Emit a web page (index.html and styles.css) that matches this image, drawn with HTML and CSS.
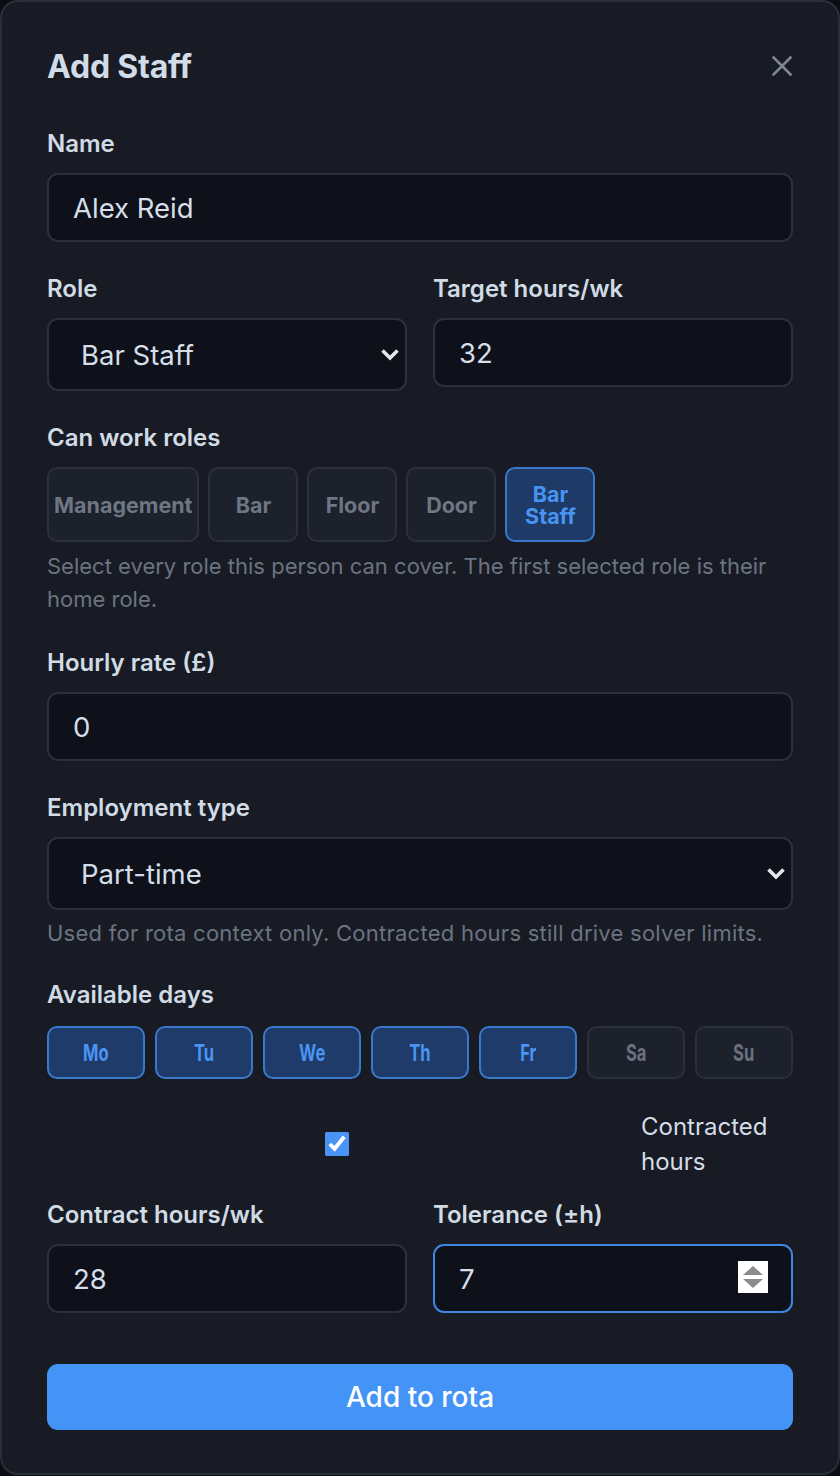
FILE: index.html
```html
<!DOCTYPE html>
<html lang="en">
<head>
<meta charset="utf-8">
<title>Add Staff</title>
<link rel="stylesheet" href="styles.css">
</head>
<body>
<div class="modal">
  <div class="header">
    <h1 class="title">Add Staff</h1>
    <button class="close" aria-label="Close">
      <svg width="20" height="20" viewBox="0 0 20 20"><path d="M1.5 1.5 L18.5 18.5 M18.5 1.5 L1.5 18.5" stroke="#7f8994" stroke-width="2.6" stroke-linecap="square" fill="none"/></svg>
    </button>
  </div>

  <div class="field">
    <label class="label">Name</label>
    <input class="input" type="text" value="Alex Reid">
  </div>

  <div class="row">
    <div class="field">
      <label class="label">Role</label>
      <div class="select-wrap">
        <select class="select"><option>Bar Staff</option></select>
        <svg class="chevron" width="20" height="13" viewBox="0 0 20 13"><path d="M2.5 2.5 L10 10 L17.5 2.5" stroke="#e2e8ef" stroke-width="3.6" fill="none"/></svg>
      </div>
    </div>
    <div class="field">
      <label class="label">Target hours/wk</label>
      <input class="input" type="text" value="32">
    </div>
  </div>

  <div class="field">
    <label class="label">Can work roles</label>
    <div class="chips">
      <button class="chip chip-wide">Management</button>
      <button class="chip">Bar</button>
      <button class="chip">Floor</button>
      <button class="chip">Door</button>
      <button class="chip chip-on">Bar Staff</button>
    </div>
    <p class="hint">Select every role this person can cover. The first selected role is their home role.</p>
  </div>

  <div class="field">
    <label class="label">Hourly rate (£)</label>
    <input class="input" type="text" value="0">
  </div>

  <div class="field field-employment">
    <label class="label">Employment type</label>
    <div class="select-wrap">
      <select class="select"><option>Part-time</option></select>
      <svg class="chevron" width="20" height="13" viewBox="0 0 20 13"><path d="M2.5 2.5 L10 10 L17.5 2.5" stroke="#e2e8ef" stroke-width="3.6" fill="none"/></svg>
    </div>
    <p class="hint hint-wide">Used for rota context only. Contracted hours still drive solver limits.</p>
  </div>

  <div class="field field-days">
    <label class="label days-label">Available days</label>
    <div class="days">
      <button class="day day-on"><span>Mo</span></button>
      <button class="day day-on"><span>Tu</span></button>
      <button class="day day-on"><span>We</span></button>
      <button class="day day-on"><span>Th</span></button>
      <button class="day day-on"><span>Fr</span></button>
      <button class="day"><span>Sa</span></button>
      <button class="day"><span>Su</span></button>
    </div>
  </div>

  <label class="check-row">
    <span class="check-cell"><input class="check" type="checkbox" checked></span>
    <span class="check-text">Contracted hours</span>
  </label>

  <div class="row row-contract">
    <div class="field">
      <label class="label">Contract hours/wk</label>
      <input class="input" type="text" value="28">
    </div>
    <div class="field">
      <label class="label">Tolerance (±h)</label>
      <div class="spin-wrap">
        <input class="input input-focus" type="text" value="7">
        <span class="spinner"><i class="up"></i><i class="down"></i></span>
      </div>
    </div>
  </div>

  <button class="submit">Add to rota</button>
</div>
</body>
</html>
```

FILE: styles.css
```css
* { box-sizing: border-box; }

html, body {
  margin: 0;
  padding: 0;
  background: #0b0e13;
}

body {
  font-family: Inter, "Noto Sans", "Liberation Sans", sans-serif;
  color: #d3dce7;
}

.modal {
  width: 840px;
  height: 1475px;
  background: #181b23;
  border: 2px solid #2a2e3b;
  border-radius: 18px;
  padding: 37px 45px 0 45px;
  display: flex;
  flex-direction: column;
}

.header {
  height: 54px;
  display: flex;
  align-items: center;
  justify-content: space-between;
  margin-bottom: 36px;
}

.title {
  margin: 0;
  font-size: 32px;
  font-weight: 700;
  color: #d1dce8;
  letter-spacing: -0.2px;
}

.close {
  background: none;
  border: 0;
  padding: 0;
  width: 20px;
  height: 20px;
  margin-right: 1px;
  display: flex;
}

.field {
  display: flex;
  flex-direction: column;
  margin-bottom: 32px;
}

.label {
  font-size: 24px;
  line-height: 30px;
  font-weight: 600;
  color: #d1dbe6;
  margin-bottom: 14px;
}

.input, .select {
  width: 100%;
  height: 69px;
  background: #0e1119;
  border: 2px solid #2b303d;
  border-radius: 11px;
  color: #d5dee9;
  font-family: Inter, "Noto Sans", "Liberation Sans", sans-serif;
  font-size: 27.5px;
  padding: 0 24px;
  outline: none;
}

.select-wrap { position: relative; }

.select {
  height: 73px;
  appearance: none;
  -webkit-appearance: none;
  padding-left: 32px;
}

.chevron {
  position: absolute;
  right: 7px;
  top: 30px;
  pointer-events: none;
}

.row {
  display: grid;
  grid-template-columns: 1fr 1fr;
  column-gap: 26px;
}

.chips {
  display: flex;
  gap: 9px;
}

.chip {
  height: 75px;
  min-width: 90px;
  max-width: 90px;
  padding: 0 4px;
  background: #1d212c;
  border: 2px solid #2b303d;
  border-radius: 10px;
  color: #6d7682;
  font-family: Inter, "Noto Sans", "Liberation Sans", sans-serif;
  font-size: 21.5px;
  font-weight: 700;
  line-height: 22px;
}

.chip-wide {
  max-width: none;
  padding: 0 5px;
}

.chip-on {
  background: #1f3a66;
  border-color: #3a78cc;
  color: #4894f2;
}

.hint {
  margin: 8px 0 0 0;
  font-size: 22px;
  line-height: 33px;
  color: #6b7481;
}

.hint-wide {
  letter-spacing: 0.25px;
  margin-top: 7px;
}

.field-employment { margin-bottom: 30px; }

.days-label { margin-bottom: 16px; }

.days {
  display: grid;
  grid-template-columns: repeat(7, 1fr);
  column-gap: 10px;
}

.field-days { margin-bottom: 30px; }

.day {
  height: 53px;
  background: #1d212c;
  border: 2px solid #2b303d;
  border-radius: 10px;
  color: #69727e;
  font-family: Inter, "Noto Sans", "Liberation Sans", sans-serif;
  font-size: 23px;
  font-weight: 700;
  padding: 0;
}

.day span {
  display: inline-block;
  transform: scaleX(0.72);
}

.day-on {
  background: #1f3b6a;
  border-color: #3a78cc;
  color: #4a94f2;
}

.check-row {
  display: grid;
  grid-template-columns: 1fr 152px;
  column-gap: 14px;
  align-items: center;
  margin-bottom: 21px;
}

.check-cell {
  display: flex;
  justify-content: center;
}

.check {
  width: 24px;
  height: 24px;
  margin: 0;
  accent-color: #4a94f5;
}

.check-text {
  font-size: 24px;
  line-height: 35px;
  color: #d3dce7;
}

.row-contract .field { margin-bottom: 51px; }

.spin-wrap { position: relative; }

.input-focus {
  border-color: #3d86e4;
}

.spinner {
  position: absolute;
  right: 25px;
  top: 17px;
  width: 30px;
  height: 32px;
  background: #ffffff;
  display: flex;
  flex-direction: column;
  align-items: center;
  justify-content: center;
  gap: 4px;
}

.spinner i {
  display: block;
  width: 0;
  height: 0;
  border-left: 10px solid transparent;
  border-right: 10px solid transparent;
}

.spinner .up { border-bottom: 9px solid #8c8c8c; }
.spinner .down { border-top: 9px solid #8c8c8c; }

.submit {
  width: 100%;
  height: 66px;
  background: #4493f6;
  border: 0;
  border-radius: 11px;
  color: #ffffff;
  font-family: Inter, "Noto Sans", "Liberation Sans", sans-serif;
  font-size: 28px;
  font-weight: 500;
}
```
